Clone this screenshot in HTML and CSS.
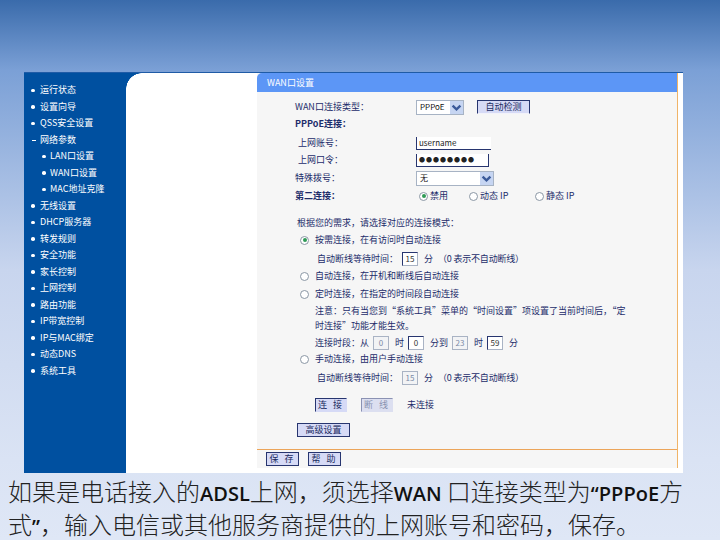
FILE: index.html
```html
<!DOCTYPE html>
<html lang="zh">
<head>
<meta charset="utf-8">
<title>WAN口设置</title>
<link rel="stylesheet" href="styles.css">
</head>
<body>
<div class="shot">
  <nav class="side">
    <div class="nav"><i class="dot"></i>运行状态</div>
    <div class="nav"><i class="dot"></i>设置向导</div>
    <div class="nav"><i class="dot"></i>QSS安全设置</div>
    <div class="nav"><i class="dash"></i>网络参数</div>
    <div class="nav sub"><i class="dot"></i>LAN口设置</div>
    <div class="nav sub"><i class="dot"></i>WAN口设置</div>
    <div class="nav sub"><i class="dot"></i>MAC地址克隆</div>
    <div class="nav"><i class="dot"></i>无线设置</div>
    <div class="nav"><i class="dot"></i>DHCP服务器</div>
    <div class="nav"><i class="dot"></i>转发规则</div>
    <div class="nav"><i class="dot"></i>安全功能</div>
    <div class="nav"><i class="dot"></i>家长控制</div>
    <div class="nav"><i class="dot"></i>上网控制</div>
    <div class="nav"><i class="dot"></i>路由功能</div>
    <div class="nav"><i class="dot"></i>IP带宽控制</div>
    <div class="nav"><i class="dot"></i>IP与MAC绑定</div>
    <div class="nav"><i class="dot"></i>动态DNS</div>
    <div class="nav"><i class="dot"></i>系统工具</div>
  </nav>
  <div class="gutter"></div>
  <main class="panel">
    <div class="head">WAN口设置</div>
    <div class="body">
      <div class="row p38"><span class="lbl">WAN口连接类型：</span>
        <span class="sel w48"><span class="val">PPPoE</span><span class="arrow"><svg viewBox="0 0 10 10"><path d="M2 3.5 5 6.5 8 3.5" fill="none" stroke="#3a5a9a" stroke-width="1.8"/></svg></span></span>
        <span class="btn detect">自动检测</span></div>
      <div class="row g3 p38"><b class="bold">PPPoE连接：</b></div>
      <div class="row g5 p41"><span class="lbl l75">上网账号：</span><span class="inp user">username</span></div>
      <div class="row g3 p41"><span class="lbl l75">上网口令：</span><span class="inp pass">●●●●●●●●</span></div>
      <div class="row g4 p38"><span class="lbl">特殊拨号：</span>
        <span class="sel w78"><span class="val">无</span><span class="arrow"><svg viewBox="0 0 10 10"><path d="M2 3.5 5 6.5 8 3.5" fill="none" stroke="#3a5a9a" stroke-width="1.8"/></svg></span></span></div>
      <div class="row g4 p38"><b class="bold lbl">第二连接：</b>
        <i class="radio on r1"></i><span class="t45">禁用</span>
        <i class="radio"></i><span class="t58">动态 IP</span>
        <i class="radio"></i><span>静态 IP</span></div>
      <div class="row g13 p40">根据您的需求，请选择对应的连接模式：</div>
      <div class="row g3 p47"><i class="radio on wide"></i>按需连接，在有访问时自动连接</div>
      <div class="row g5 p60">自动断线等待时间：<span class="box wh">15</span><span class="u">分</span><span class="hint">（0 表示不自动断线）</span></div>
      <div class="row g3 p47"><i class="radio wide"></i>自动连接，在开机和断线后自动连接</div>
      <div class="row g4 p47"><i class="radio wide"></i>定时连接，在指定的时间段自动连接</div>
      <div class="row g3 p58">注意：只有当您到“系统工具”菜单的“时间设置”项设置了当前时间后，“定</div>
      <div class="row g1 p58">时连接”功能才能生效。</div>
      <div class="row g3 p58">连接时段：从<span class="box dim">0</span><span class="u">时</span><span class="box wh">0</span><span class="u">分到</span><span class="box dim">23</span><span class="u">时</span><span class="box wh">59</span><span class="u">分</span></div>
      <div class="row g2 p47"><i class="radio wide"></i>手动连接，由用户手动连接</div>
      <div class="row g5 p60">自动断线等待时间：<span class="box dim">15</span><span class="u">分</span><span class="hint">（0 表示不自动断线）</span></div>
      <div class="row g13 p58"><span class="btn conn">连 接</span><span class="btn conn off">断 线</span><span>未连接</span></div>
      <div class="row g11 p40"><span class="btn adv">高级设置</span></div>
    </div>
    <div class="foot"><span class="btn save">保 存</span><span class="btn save">帮 助</span></div>
  </main>
  <div class="strip"></div>
</div>
<p class="cap">如果是电话接入的<span class="lat">ADSL</span>上网，须选择<span class="lat">WAN</span> 口连接类型为<span class="lat">“PPPoE</span>方<br>式<span class="lat">”</span>，输入电信或其他服务商提供的上网账号和密码，保存。</p>
</body>
</html>
```
FILE: styles.css
```css
* { box-sizing: border-box; }
html, body { margin: 0; height: 540px; overflow: hidden; }
body {
  background: linear-gradient(180deg, #3a6bab 0%, #7ba0d6 13%, #c8d5ee 50%, #dae3f4 85%, #dfe7f6 100%);
  font-family: "Noto Sans CJK SC", "Liberation Sans", sans-serif;
  padding-top: 72px;
}
.shot {
  width: 659px; height: 401px; margin-left: 24px;
  display: flex; background: #fff;
  border-top: 1px solid #1f5ba6;
  font-size: 9px; line-height: 14px; color: #1c2c6a;
}
.side { width: 102px; background: #0050a0; color: #fff; padding-top: 9px; flex: none; }
.nav { height: 16.5px; line-height: 16.5px; padding-left: 16px; position: relative; white-space: nowrap; }
.nav.sub { padding-left: 26px; }
.dot { position: absolute; left: 7px; top: 6.5px; width: 3.5px; height: 3.5px; border-radius: 50%; background: #fff; }
.sub .dot { left: 18px; }
.dash { position: absolute; left: 8px; top: 8px; width: 4px; height: 1px; background: #fff; }
.gutter { width: 131px; flex: none; background: #fff; position: relative; }
.gutter::before {
  content: ""; position: absolute; left: 0; top: 0; width: 16px; height: 16px;
  background: radial-gradient(circle at 100% 100%, #fff 15.5px, #0050a0 16px);
}
.panel { width: 421px; flex: none; background: #f6f6f6; display: flex; flex-direction: column; height: 395px; border-right: 1px solid #f0b468; }
.head { height: 19px; background: #5c96f6; color: #fff; padding-left: 10px; line-height: 19px; border-top-left-radius: 5px; flex: none; }
.body { flex: 1; padding-top: 8px; display: flex; flex-direction: column; }
.row { height: 14px; display: flex; align-items: center; white-space: nowrap; flex: none; }
.g1 { margin-top: 1px; } .g2 { margin-top: 2px; } .g3 { margin-top: 3px; } .g4 { margin-top: 4px; }
.g5 { margin-top: 5px; } .g11 { margin-top: 11px; } .g13 { margin-top: 13px; }
.p38 { padding-left: 38px; } .p40 { padding-left: 40px; } .p41 { padding-left: 41px; }
.p47 { padding-left: 43px; } .p58 { padding-left: 58px; } .p60 { padding-left: 60px; }
.lbl { width: 121px; flex: none; }
.l75 { width: 118px; }
.bold { font-weight: 700; }
.sel { height: 15px; border: 1px solid #a7b3c4; background: #fff; display: flex; align-items: center; justify-content: space-between; flex: none; padding-left: 3px; color: #111; }
.w48 { width: 48px; margin-right: 13px; }
.w78 { width: 78px; }
.arrow { width: 13px; height: 13px; background: #c6d5f2; display: flex; }
.arrow svg { width: 13px; height: 13px; }
.val { font-size: 8px; }
.btn { height: 14px; background: #d6daf6; border: 1px solid #27356f; border-bottom-color: #f2f2fa; display: inline-flex; align-items: center; justify-content: center; flex: none; color: #1a2a60; }
.detect { width: 53px; }
.inp { height: 13px; background: #fff; border-left: 1px solid #27356f; border-bottom: 1px solid #27356f; display: flex; align-items: center; padding-left: 2px; color: #222; font-size: 8px; flex: none; }
.user { width: 75px; }
.pass { width: 73px; border-right: 1px solid #27356f; font-size: 6px; letter-spacing: 1px; }
.radio { width: 9px; height: 9px; border: 1px solid #8b97a5; border-radius: 50%; background: #fff; flex: none; margin-right: 2px; position: relative; }
.radio.wide { margin-right: 6px; }
.radio.on::after { content: ""; position: absolute; left: 1.5px; top: 1.5px; width: 4px; height: 4px; background: #2f9a55; border-radius: 50%; }
.r1 { margin-left: 3px; }
.t45 { width: 39px; }
.t58 { width: 55px; }
.box { width: 16px; height: 14px; border: 1px solid #a9b3c4; text-align: center; line-height: 12px; margin-left: 4px; flex: none; color: #7b8aa6; font-size: 8px; }
.wh { background: #fff; border-left-color: #27356f; border-top-color: #27356f; color: #333; }
.dim { background: #f2f3f5; }
.u { margin-left: 6px; }
.hint { margin-left: 5px; letter-spacing: -0.2px; }
.conn { width: 32px; margin-right: 14px; border-right-color: #d6daf6; border-bottom-color: #d6daf6; letter-spacing: 2px; }
.conn.off { color: #8a93b0; border-color: #8b92b3; border-right-color: #dcdff0; border-bottom-color: #dcdff0; background: #dcdff0; }
.adv { width: 53px; border-bottom-color: #27356f; }
.foot { height: 19px; border-top: 1px solid #eca55a; padding: 2px 0 0 9px; display: flex; gap: 9px; flex: none; background: #f6f6f6; }
.save { width: 33px; border-bottom-color: #27356f; letter-spacing: 2px; }
.strip { width: 5px; flex: none; background: #fff; }
.cap { margin: 3px 0 0 8px; font-size: 24px; line-height: 30px; color: #222; font-weight: 300; white-space: nowrap; }
.lat { font-family: "Open Sans", "Liberation Sans", sans-serif; font-size: 20px; font-weight: 600; color: #111; }
```
